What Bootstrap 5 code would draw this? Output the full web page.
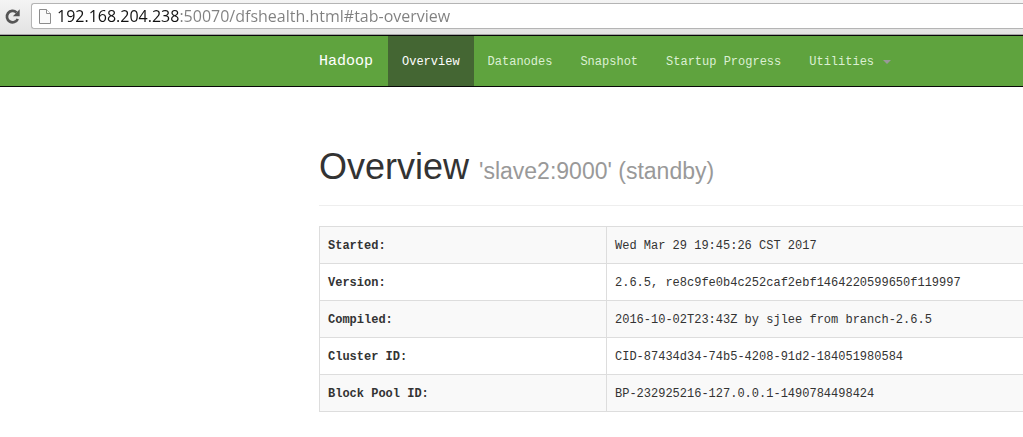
<!DOCTYPE html>
<html lang="en">
<head>
<meta charset="utf-8">
<meta name="viewport" content="width=device-width, initial-scale=1">
<title>Namenode information</title>
<link href="https://cdn.jsdelivr.net/npm/bootstrap@5.3.0/dist/css/bootstrap.min.css" rel="stylesheet">
<style>
  :root { --page-start: 319px; }
  body { font: 12px/20px "Liberation Mono", monospace; color: #333; background: #fff; }

  .browser-bar { height: 35px; padding: 3px 0 5px; background: linear-gradient(#f4f4f4, #e3e3e3); border-bottom: 1px solid #a5a5a5; }
  .reload-btn { width: 31px; padding: 0 0 0 4px; border: 0; background: none; line-height: 0; text-align: left; }
  .address-box { border: 1px solid #b4b4b4; border-right: 0; border-radius: 3px 0 0 3px; background: #fff; padding-left: 6px; }
  .address-input {
    border: 0; outline: 0; padding: 0; margin-left: 5px; height: 25px;
    font: 16px/25px "Open Sans", sans-serif; color: transparent;
    background: linear-gradient(90deg, #111 123px, #808080 123px);
    -webkit-background-clip: text; background-clip: text;
  }

  .hadoop-nav { padding: 0 0 0 var(--page-start); background: #5fa33e; border: solid #080808; border-width: 1px 0; }
  .hadoop-nav .navbar-brand { width: 69px; margin: 0; padding: 16px 0 14px; font-size: 15px; line-height: 20px; color: #fff; }
  .hadoop-nav .navbar-nav .nav-link { padding: 16px 14px 14px; line-height: 20px; color: #dcf0d3; }
  .hadoop-nav .navbar-nav .nav-link.active { color: #fff; background: #446633; }
  .hadoop-nav .dropdown-toggle::after { margin-left: 9px; border-width: 4px 4px 0; border-top-color: #999; vertical-align: 1px; }

  .page-body { padding-left: var(--page-start); }
  .page-title { padding: 59px 0 18px; margin: 0 0 20px; border-bottom: 1px solid #eee; }
  .page-title h1 { margin: 0; font: 36px/41px "Liberation Sans", Arial, sans-serif; }
  .page-title small { font-size: 23px; line-height: 1; color: #999; }

  .info-table { --bs-table-striped-bg: #f9f9f9; --bs-table-striped-color: #333; color: #333; border-color: #ddd; table-layout: fixed; }
  .info-table th { width: 287px; }
  .info-table th, .info-table td { padding: 9px 8px 7px; }
  .info-table td:last-child { border-right: 0; }
</style>
</head>
<body>
<header class="browser-bar d-flex">
  <button class="reload-btn flex-shrink-0" type="button" aria-label="Reload">
    <svg width="17" height="17" viewBox="0 0 17 17" fill="none">
      <path d="M12.5 4.4A5.7 5.7 0 1 0 13.8 11" stroke="#555" stroke-width="2.7"/>
      <path d="M15.7 1.2v7H8.9z" fill="#555"/>
    </svg>
  </button>
  <div class="address-box d-flex align-items-center flex-grow-1">
    <svg width="14" height="17" viewBox="0 0 14 17" fill="#fafafa" stroke="#8c8c8c" aria-hidden="true">
      <path d="M1.5 1.5h7l4 4v10h-11z"/>
      <path d="M8.5 1.5v4h4" fill="#fff"/>
    </svg>
    <input class="address-input flex-grow-1" type="text" aria-label="Address" spellcheck="false" value="192.168.204.238:50070/dfshealth.html#tab-overview">
  </div>
</header>

<nav class="navbar navbar-expand hadoop-nav">
  <a class="navbar-brand" href="#">Hadoop</a>
  <ul class="navbar-nav">
    <li class="nav-item"><a class="nav-link active" aria-current="page" href="#tab-overview">Overview</a></li>
    <li class="nav-item"><a class="nav-link" href="#tab-datanode">Datanodes</a></li>
    <li class="nav-item"><a class="nav-link" href="#tab-snapshot">Snapshot</a></li>
    <li class="nav-item"><a class="nav-link" href="#tab-startup-progress">Startup Progress</a></li>
    <li class="nav-item dropdown">
      <a class="nav-link dropdown-toggle" href="#" role="button" data-bs-toggle="dropdown" aria-expanded="false">Utilities</a>
    </li>
  </ul>
</nav>

<main class="page-body">
  <div class="page-title">
    <h1>Overview <small>'slave2:9000' (standby)</small></h1>
  </div>
  <table class="table table-bordered table-striped info-table">
    <tbody>
      <tr><th scope="row">Started:</th><td>Wed Mar 29 19:45:26 CST 2017</td></tr>
      <tr><th scope="row">Version:</th><td>2.6.5, re8c9fe0b4c252caf2ebf1464220599650f119997</td></tr>
      <tr><th scope="row">Compiled:</th><td>2016-10-02T23:43Z by sjlee from branch-2.6.5</td></tr>
      <tr><th scope="row">Cluster ID:</th><td>CID-87434d34-74b5-4208-91d2-184051980584</td></tr>
      <tr><th scope="row">Block Pool ID:</th><td>BP-232925216-127.0.0.1-1490784498424</td></tr>
    </tbody>
  </table>
</main>
<script src="https://cdn.jsdelivr.net/npm/bootstrap@5.3.0/dist/js/bootstrap.bundle.min.js"></script>
</body>
</html>
